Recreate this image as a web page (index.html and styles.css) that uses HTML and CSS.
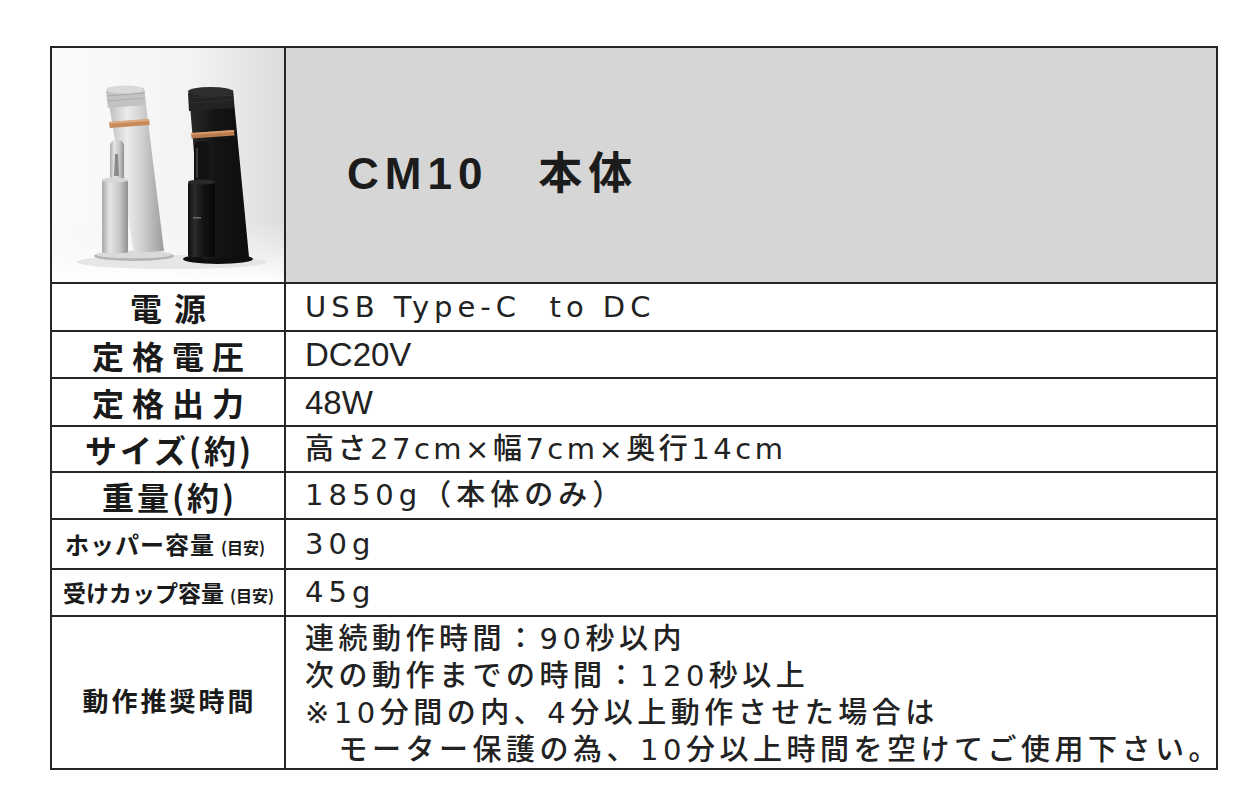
FILE: index.html
```html
<!DOCTYPE html>
<html lang="ja">
<head>
<meta charset="utf-8">
<title>CM10 本体 仕様</title>
<link rel="stylesheet" href="styles.css">
</head>
<body>
<div class="spec">
  <div class="cell photo">
    <svg class="photo-svg" viewBox="0 0 232 234" width="232" height="234" aria-label="CM10 本体（シルバー・ブラック）">
      <defs>
        <linearGradient id="bg" x1="0" y1="0" x2="1" y2="0">
          <stop offset="0" stop-color="#fbfbfb"/>
          <stop offset="0.6" stop-color="#f3f3f3"/>
          <stop offset="1" stop-color="#dcdcdc"/>
        </linearGradient>
        <linearGradient id="floor" x1="0" y1="0" x2="0" y2="1">
          <stop offset="0" stop-color="#f4f4f4" stop-opacity="0"/>
          <stop offset="1" stop-color="#ffffff"/>
        </linearGradient>
        <linearGradient id="silver" x1="0" y1="0" x2="1" y2="0">
          <stop offset="0" stop-color="#b9b9b9"/>
          <stop offset="0.35" stop-color="#ececec"/>
          <stop offset="0.6" stop-color="#d2d2d2"/>
          <stop offset="1" stop-color="#9c9c9c"/>
        </linearGradient>
        <linearGradient id="silverCup" x1="0" y1="0" x2="1" y2="0">
          <stop offset="0" stop-color="#a9a9a9"/>
          <stop offset="0.3" stop-color="#e6e6e6"/>
          <stop offset="0.7" stop-color="#c4c4c4"/>
          <stop offset="1" stop-color="#8f8f8f"/>
        </linearGradient>
        <linearGradient id="black" x1="0" y1="0" x2="1" y2="0">
          <stop offset="0" stop-color="#2b2b2b"/>
          <stop offset="0.4" stop-color="#151515"/>
          <stop offset="1" stop-color="#0c0c0c"/>
        </linearGradient>
        <linearGradient id="blackCup" x1="0" y1="0" x2="1" y2="0">
          <stop offset="0" stop-color="#0e0e0e"/>
          <stop offset="0.25" stop-color="#2c2c2c"/>
          <stop offset="0.55" stop-color="#141414"/>
          <stop offset="1" stop-color="#080808"/>
        </linearGradient>
      </defs>
      <rect x="0" y="0" width="232" height="234" fill="url(#bg)"/>
      <rect x="0" y="170" width="232" height="64" fill="url(#floor)"/>
      <ellipse cx="120" cy="214" rx="95" ry="7" fill="#e6e6e6"/>

      <ellipse cx="82" cy="208" rx="40" ry="5" fill="#b3b3b3"/>
      <ellipse cx="82" cy="206.5" rx="38" ry="3.8" fill="#dadada"/>
      <polygon points="55,44 92,41 112,203 82,205" fill="url(#silver)"/>
      <polygon points="54,43 92,40 94,57 56,60" fill="#c3c3c3"/>
      <line x1="55" y1="48" x2="93" y2="45" stroke="#a9a9a9" stroke-width="1"/>
      <line x1="55" y1="53" x2="93" y2="50" stroke="#b0b0b0" stroke-width="1"/>
      <ellipse cx="73" cy="41.5" rx="19" ry="4" fill="#d9d9d9"/>
      <polygon points="57,74 97,71 97.8,77 57.8,80" fill="#c98a5a"/>
      <polygon points="57,74 97,71 97.3,73 57.3,76" fill="#e0aa7e"/>
      <path d="M58 132 L58 98 Q58 92 65 92 Q72 92 72 98 L72 132 Z" fill="url(#silverCup)"/>
      <path d="M63 106 L66 106 L67 128 L62 128 Z" fill="#8a8a8a"/>
      <rect x="50" y="132" width="26" height="73" rx="2" fill="url(#silverCup)"/>
      <ellipse cx="63" cy="132" rx="13" ry="2.5" fill="#d7d7d7"/>

      <ellipse cx="166" cy="211" rx="35" ry="5" fill="#0f0f0f"/>
      <polygon points="137,46 181,43 197,209 151,211" fill="url(#black)"/>
      <polygon points="136,45 181,42 182,60 137,63" fill="#232323"/>
      <line x1="137" y1="50" x2="181" y2="47" stroke="#333" stroke-width="1"/>
      <line x1="137" y1="55" x2="181" y2="52" stroke="#2f2f2f" stroke-width="1"/>
      <ellipse cx="158.5" cy="43.5" rx="22.5" ry="4.5" fill="#2e2e2e"/>
      <polygon points="139,85 182,82 182.6,87.5 139.6,90.5" fill="#b97a4e"/>
      <polygon points="139,85 182,82 182.2,84 139.2,87" fill="#d49a6c"/>
      <path d="M142 134 L142 99 Q142 93 149.5 93 Q157 93 157 99 L157 134 Z" fill="#121212"/>
      <path d="M144 100 L146 100 L146 130 L144 130 Z" fill="#3a3a3a"/>
      <rect x="136" y="134" width="27" height="75" rx="2" fill="url(#blackCup)"/>
      <ellipse cx="149.5" cy="134" rx="13.5" ry="2.5" fill="#2a2a2a"/>
      <rect x="141" y="169" width="8" height="1.5" fill="#6a6a6a"/>
    </svg>
  </div>
  <div class="cell title"><span class="title-text">CM10　本体</span></div>

  <div class="cell label ls-12"><span>電源</span></div>
  <div class="cell value">USB Type-C  to DC</div>

  <div class="cell label ls-8"><span>定格電圧</span></div>
  <div class="cell value value-latin">DC20V</div>

  <div class="cell label ls-8"><span>定格出力</span></div>
  <div class="cell value value-latin">48W</div>

  <div class="cell label ls-3"><span>サイズ(約)</span></div>
  <div class="cell value value-tight">高さ27cm×幅7cm×奥行14cm</div>

  <div class="cell label ls-3"><span>重量(約)</span></div>
  <div class="cell value">1850g（本体のみ）</div>

  <div class="cell label label-small label-hopper"><span>ホッパー容量<small class="note">(目安)</small></span></div>
  <div class="cell value">30g</div>

  <div class="cell label label-small label-cup"><span>受けカップ容量<small class="note">(目安)</small></span></div>
  <div class="cell value">45g</div>

  <div class="cell label label-time"><span>動作推奨時間</span></div>
  <div class="cell value value-multi">連続動作時間：90秒以内<br>次の動作までの時間：120秒以上<br>※10分間の内、4分以上動作させた場合は<br>　モーター保護の為、10分以上時間を空けてご使用下さい。</div>
</div>
</body>
</html>
```

FILE: styles.css
```css
html, body {
  margin: 0;
  padding: 0;
  background: #ffffff;
}

body {
  width: 1250px;
  height: 792px;
  overflow: hidden;
  font-family: "Noto Sans CJK JP", sans-serif;
  color: #1e1e1e;
}

.spec {
  margin: 46px 0 0 50px;
  width: 1168px;
  box-sizing: border-box;
  padding: 2px;
  display: grid;
  grid-template-columns: 232px 1fr;
  grid-template-rows: 234px 46px 45px 46px 44px 45px 48px 45px 151px;
  gap: 2px;
  background: #262626;
}

.cell {
  background: #ffffff;
  display: flex;
  align-items: center;
  min-width: 0;
}

.photo {
  padding: 0;
}

.photo-svg {
  display: block;
}

.title {
  background: #d6d6d6;
  padding: 18px 0 0 61px;
  box-sizing: border-box;
}

.title-text {
  font-family: "Liberation Sans", "Noto Sans CJK JP", sans-serif;
  font-weight: 700;
  font-size: 44px;
  line-height: 1;
  letter-spacing: 6px;
  color: #1c1c1c;
}

.label {
  justify-content: center;
  font-family: "Noto Sans CJK JP", sans-serif;
  font-weight: 700;
  font-size: 32px;
  line-height: 1;
  color: #1a1a1a;
  --ls: 0px;
}

.label span {
  letter-spacing: var(--ls);
  margin-right: calc(-1 * var(--ls));
}

.ls-12 { --ls: 12px; }
.ls-8 { --ls: 8px; }
.ls-3 { --ls: 3px; }

.label-small {
  justify-content: flex-start;
}

.label-small span {
  display: flex;
  align-items: baseline;
}

.label-hopper {
  font-size: 24px;
  --ls: 1px;
  padding-left: 13px;
}

.label-cup {
  font-size: 23px;
  --ls: 0px;
  padding-left: 11px;
}

.note {
  font-size: 16px;
  margin-left: 6px;
  font-weight: 700;
  letter-spacing: 0;
}

.label-time {
  font-size: 26px;
  --ls: 3px;
  padding-top: 14px;
  box-sizing: border-box;
}

.value {
  padding-left: 19px;
  font-family: "DejaVu Sans", "Noto Sans CJK JP", sans-serif;
  font-weight: 500;
  font-size: 29px;
  line-height: 1;
  letter-spacing: 5px;
  white-space: pre;
  color: #222222;
}

.value-latin {
  font-family: "Liberation Sans", sans-serif;
  font-size: 33px;
  letter-spacing: 0;
}

.value-tight {
  letter-spacing: 3.5px;
}

.value-multi {
  display: block;
  padding-top: 4px;
  line-height: 37px;
  letter-spacing: 4.5px;
}
```
